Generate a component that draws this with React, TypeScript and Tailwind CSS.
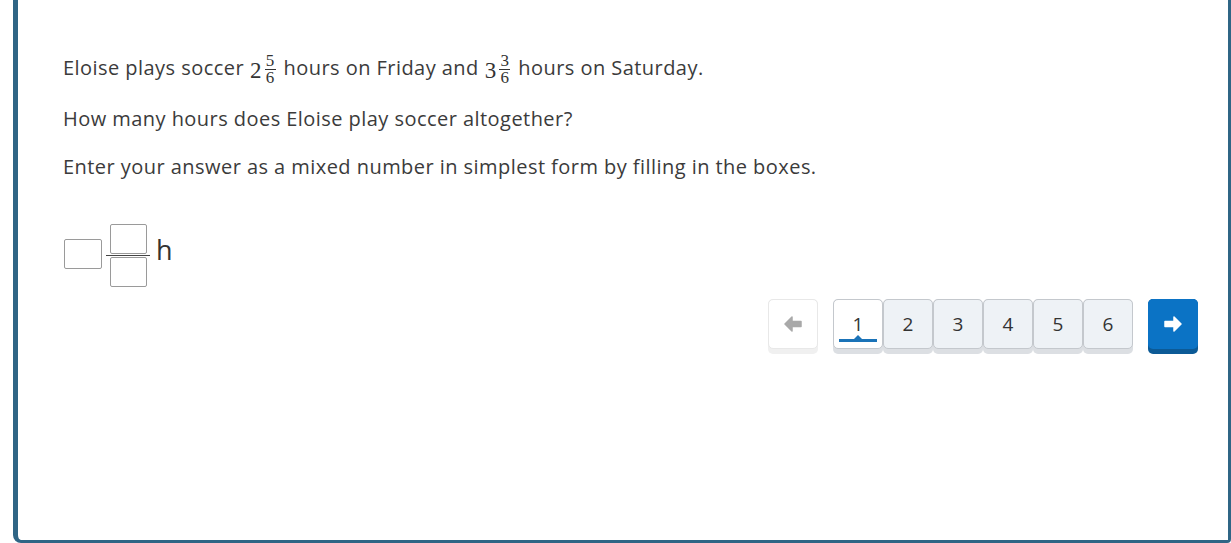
import React from "react";

const Frac = ({ w, n, d }: { w: string; n: string; d: string }) => (
  <span className="inline-flex items-center ml-[6px] mr-[8px] tracking-normal text-[#333] font-['Liberation_Serif','DejaVu_Serif',serif]">
    <span className="text-[23px] leading-none mt-[4px]">{w}</span>
    <span className="inline-flex flex-col items-center ml-[3px] text-[17px] leading-[16px] mt-[2px]">
      <span>{n}</span>
      <span className="border-t border-[#333] w-[11px] text-center">{d}</span>
    </span>
  </span>
);

export default function App() {
  const pages = ["1", "2", "3", "4", "5", "6"];
  return (
    <div className="w-[1231px] h-[543px] bg-white overflow-hidden">
      <div className="ml-[13px] h-[543px] border-l-[5px] border-r-[3px] border-b-[3px] border-[#2f6585] rounded-bl-[8px] rounded-br-[4px] bg-white pl-[45px] pr-[30px] pt-[48px] text-[#3b3b3b] font-['Open_Sans',sans-serif]">
        <div className="text-[20px] tracking-[0.45px] leading-[40px] flex items-center h-[40px]">
          <span>Eloise plays soccer</span>
          <Frac w="2" n="5" d="6" />
          <span>hours on Friday and</span>
          <Frac w="3" n="3" d="6" />
          <span>hours on Saturday.</span>
        </div>
        <div className="text-[20px] tracking-[0.45px] leading-[26px] mt-[18px]">
          How many hours does Eloise play soccer altogether?
        </div>
        <div className="text-[20px] tracking-[0.45px] leading-[26px] mt-[22px]">
          Enter your answer as a mixed number in simplest form by filling in the boxes.
        </div>
        <div className="flex items-center mt-[44px] h-[62px]">
          <div className="w-[38px] h-[30px] border border-[#9a9a9a] rounded-[2px] ml-[1px] mt-[-3px]" />
          <div className="flex flex-col items-center ml-[4px]">
            <div className="w-[37px] h-[30px] border border-[#9a9a9a] rounded-[2px]" />
            <div className="w-[44px] h-[1px] bg-[#444] my-[1px]" />
            <div className="w-[37px] h-[30px] border border-[#9a9a9a] rounded-[2px]" />
          </div>
          <span className="text-[27px] ml-[6px] leading-none text-[#333] -mt-[12px]">h</span>
        </div>
        <div className="flex justify-end mt-[13px]">
          <div className="w-[50px] h-[55px] rounded-[5px] bg-[#f0f0f0]">
            <div className="w-[50px] h-[50px] rounded-[5px] bg-white border border-[#e8e8e8] flex items-center justify-center">
              <svg width="20" height="16" viewBox="0 0 20 16">
                <path d="M9 1 L2 8 L9 15 L9 10.5 L18 10.5 L18 5.5 L9 5.5 Z" fill="#a9a9a9" stroke="#a9a9a9" strokeWidth="1.5" strokeLinejoin="round" />
              </svg>
            </div>
          </div>
          <div className="flex ml-[15px]">
            {pages.map((p, i) => (
              <div key={p} className="w-[50px] h-[55px] rounded-[5px] bg-[#dcdfe3]">
                <div
                  className={`relative w-[50px] h-[50px] rounded-[5px] border border-[#c4c8cd] flex items-center justify-center text-[19px] text-[#333] ${
                    i === 0 ? "bg-white" : "bg-[#eef2f6]"
                  }`}
                >
                  {p}
                  {i === 0 && (
                    <div className="absolute left-[5px] right-[5px] bottom-[6px] h-[3px] bg-[#1a73b8]">
                      <div className="absolute left-1/2 -translate-x-1/2 -top-[4px] w-0 h-0 border-l-[4px] border-r-[4px] border-b-[4px] border-l-transparent border-r-transparent border-b-[#1a73b8]" />
                    </div>
                  )}
                </div>
              </div>
            ))}
          </div>
          <div className="w-[50px] h-[55px] rounded-[5px] bg-[#0c5a96] ml-[15px]">
            <div className="w-[50px] h-[50px] rounded-[5px] bg-[#0b73c5] flex items-center justify-center">
              <svg width="20" height="16" viewBox="0 0 20 16">
                <path d="M11 1 L18 8 L11 15 L11 10.5 L2 10.5 L2 5.5 L11 5.5 Z" fill="#ffffff" stroke="#ffffff" strokeWidth="1.5" strokeLinejoin="round" />
              </svg>
            </div>
          </div>
        </div>
      </div>
    </div>
  );
}
